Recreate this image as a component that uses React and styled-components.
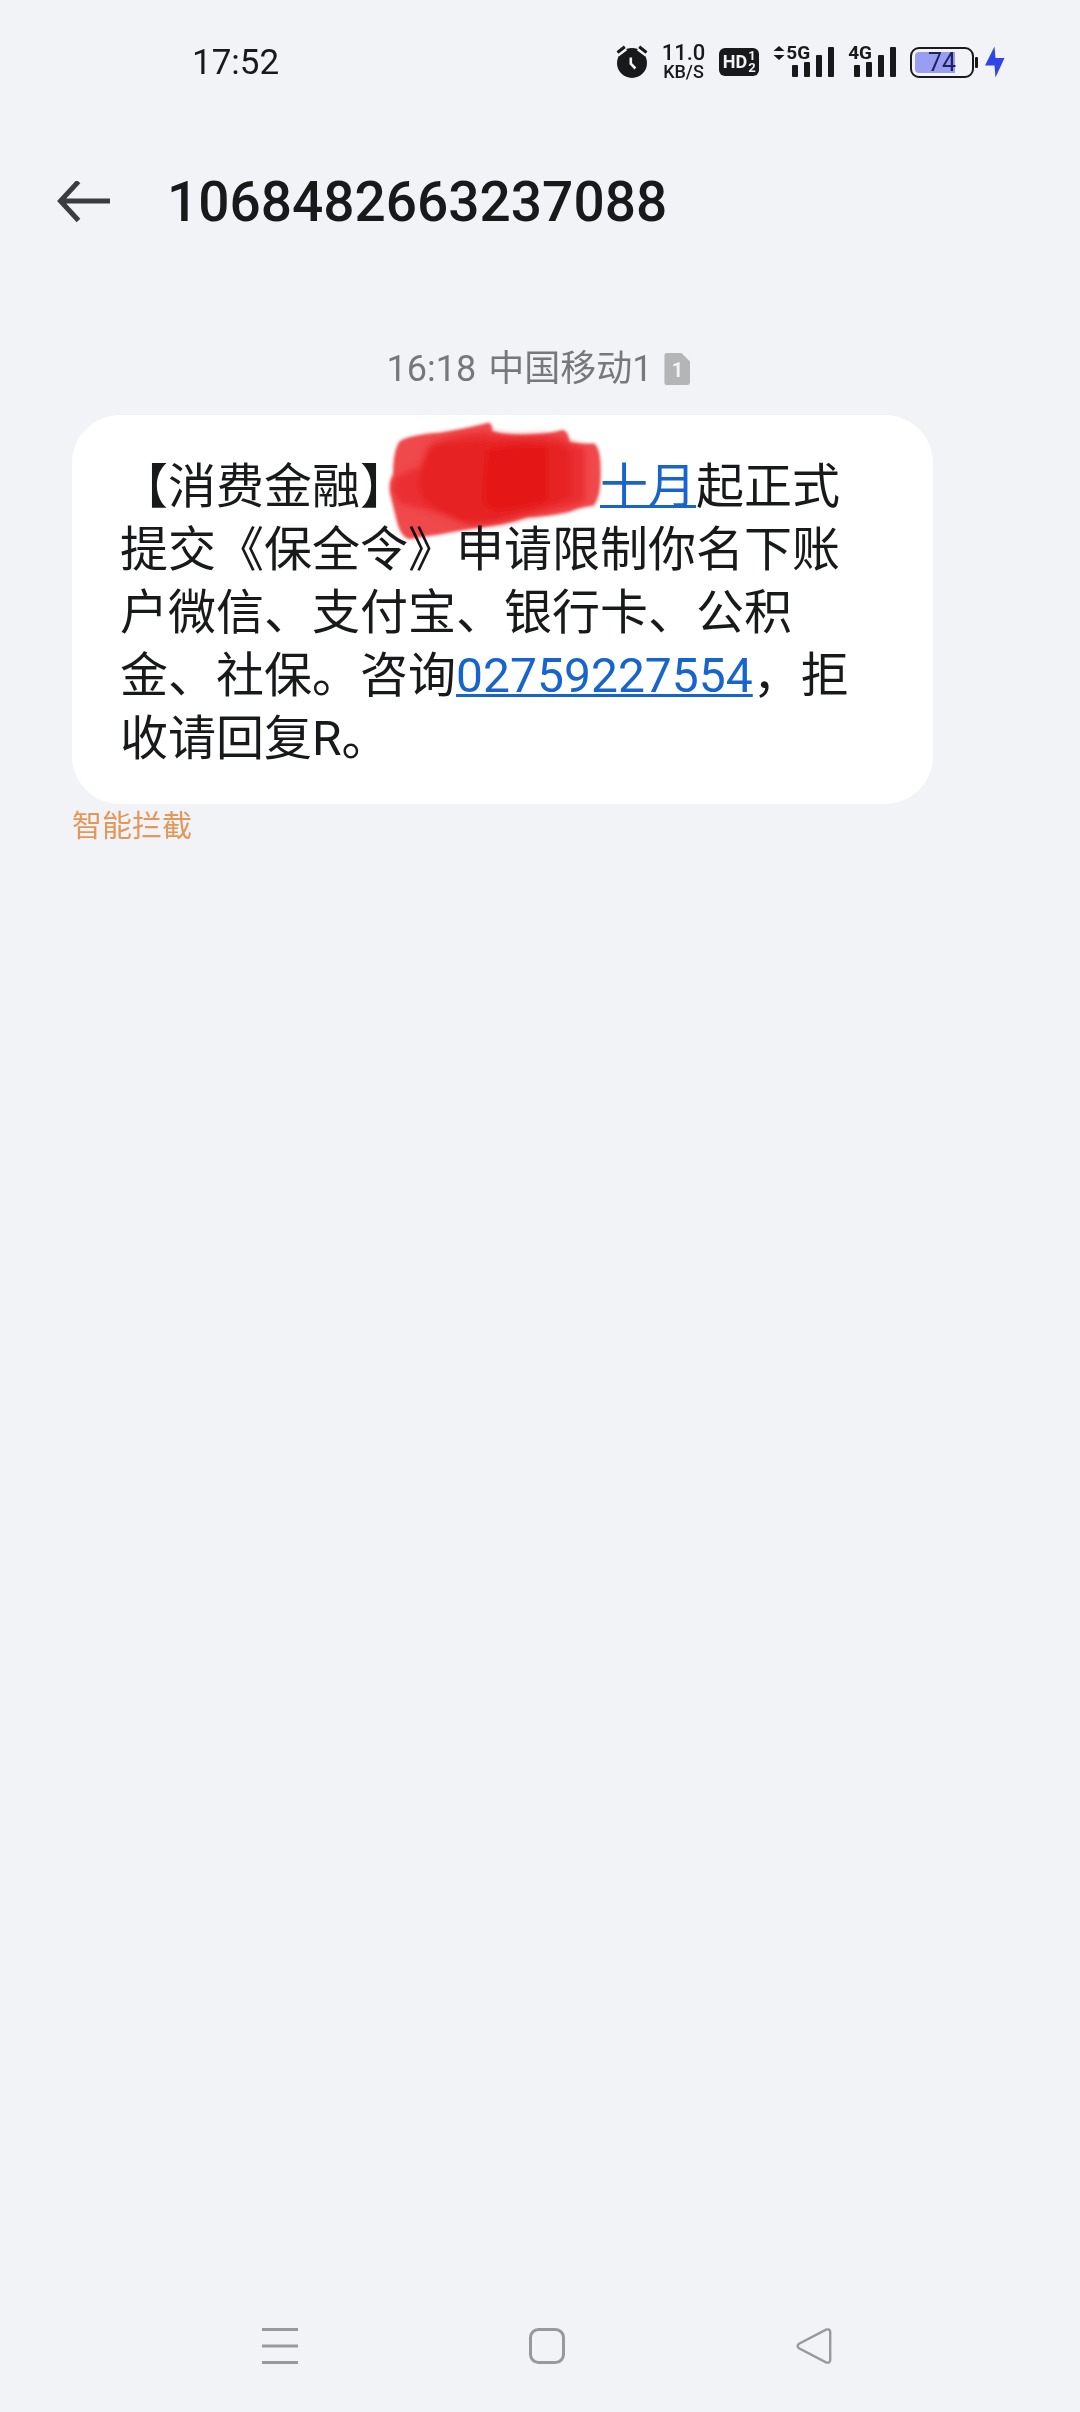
import styled, { createGlobalStyle } from "styled-components";

const GlobalStyle = createGlobalStyle`
    * {
        box-sizing: border-box;
    }

    body {
        margin: 0;
        background: #f2f3f6;
        color: #18191b;
        font-family: Roboto, "Noto Sans CJK SC", sans-serif;
    }

    svg {
        display: block;
        flex-shrink: 0;
    }
`;

function AlarmIcon() {
    return (
        <svg width="32" height="34" viewBox="0 0 32 34" aria-hidden="true">
            <circle cx="16" cy="18" r="15" fill="#18191b" />
            <path d="M1 8.5 9 2.5M23 2.5 31 8.5" stroke="#f2f3f6" strokeWidth="7" fill="none" />
            <path d="M1.5 7.5 8.8 1.8M23.2 1.8 30.5 7.5" stroke="#18191b" strokeWidth="3" fill="none" />
            <path d="M14.8 12.5v6.2l4.6 4.8" stroke="#f2f3f6" strokeWidth="2.6" fill="none" />
        </svg>
    );
}

function Signal({ label, data }) {
    return (
        <SignalBox>
            <SignalHead>
                {data && (
                    <svg width="12" height="16" viewBox="0 0 12 16" aria-hidden="true">
                        <path d="M6 1 11.5 6H.5zM6 15 .5 10h11z" fill="#18191b" />
                    </svg>
                )}
                {label}
            </SignalHead>
            <Bars>
                <Bar $height={12} />
                <Bar $height={15} />
                <Bar $height={22} />
                <Bar $height={30} />
            </Bars>
        </SignalBox>
    );
}

function Scribble() {
    return (
        <ScribbleSvg viewBox="80 50 660 380" aria-hidden="true">
            <defs>
                <filter id="edge" x="-5%" y="-5%" width="110%" height="110%">
                    <feGaussianBlur stdDeviation="5" />
                </filter>
                <filter id="inner" x="-10%" y="-10%" width="120%" height="120%">
                    <feGaussianBlur stdDeviation="9" />
                </filter>
            </defs>
            <path
                d="M118 122Q150 102 240 96Q320 84 385 66Q398 72 396 92Q440 106 510 102Q570 100 608 88Q624 92 628 126Q670 130 700 128Q722 140 721 215Q722 290 700 316Q650 322 630 334Q560 350 500 350Q440 372 380 378Q300 390 240 402Q180 410 148 416Q124 412 112 372Q98 320 90 280Q84 250 98 220Q98 150 118 122z"
                fill="#f0484c"
                filter="url(#edge)"
            />
            <g filter="url(#inner)">
                <path
                    d="M210 130Q280 98 370 94Q440 112 540 104Q600 104 622 124Q670 140 674 150V300Q640 318 600 324Q540 338 480 350Q420 372 340 374Q290 370 270 352Q180 320 120 310Q96 280 96 250Q96 226 184 198Q186 160 210 130z"
                    fill="#ea2f32"
                />
                <path
                    d="M220 134Q300 120 400 124Q500 108 600 134L630 150V290Q560 322 470 342Q400 364 330 368Q290 356 230 326Q180 300 176 250Q180 180 220 134z"
                    fill="#e62124"
                />
                <path d="M380 150Q450 130 560 138V300Q500 320 420 330Q370 325 370 290z" fill="#e51819" />
            </g>
        </ScribbleSvg>
    );
}

function App() {
    return (
        <Page>
            <GlobalStyle />
            <StatusBar>
                <Clock>17:52</Clock>
                <StatusIcons>
                    <AlarmIcon />
                    <NetSpeed>
                        <Speed>11.0</Speed>
                        <Unit>KB/S</Unit>
                    </NetSpeed>
                    <HdBadge>
                        HD
                        <HdSims>
                            <span>1</span>
                            <span>2</span>
                        </HdSims>
                    </HdBadge>
                    <Signal label="5G" data />
                    <Signal label="4G" />
                    <Power>
                        <Battery>
                            <Charge style={{ width: "74%" }} />
                            <Level>74</Level>
                        </Battery>
                        <Nub />
                        <svg width="20" height="32" viewBox="0 0 20 32" aria-hidden="true">
                            <path d="M9.5 .5 0 19.5h9.5L10.5 31.5 19.5 12H10.5z" fill="#2f45e6" />
                        </svg>
                    </Power>
                </StatusIcons>
            </StatusBar>

            <Header>
                <BackButton type="button" aria-label="返回">
                    <svg width="54" height="42" viewBox="0 0 54 42" aria-hidden="true">
                        <path d="M53 20H4M21.5 .5 3.5 20l18 19.5" stroke="#3c3c3d" strokeWidth="5" fill="none" />
                    </svg>
                </BackButton>
                <Title>1068482663237088</Title>
            </Header>

            <Thread>
                <Stamp>
                    <time>16:18</time>
                    <span>中国移动1</span>
                    <SimCard>1</SimCard>
                </Stamp>
                <Message>
                    <Bubble>
                        【消费金融】
                        <Redacted>
                            <Scribble />
                        </Redacted>
                        <Link href="#date">十月</Link>
                        起正式提交《保全令》申请限制你名下账户微信、支付宝、银行卡、公积金、社保。咨询
                        <Link href="tel:02759227554">02759227554</Link>
                        ，拒收请回复R。
                    </Bubble>
                    <Tag>智能拦截</Tag>
                </Message>
            </Thread>

            <NavBar>
                <NavButton type="button" aria-label="最近任务">
                    <svg width="36" height="36" viewBox="0 0 36 36" aria-hidden="true">
                        <path d="M0 1.5h36M0 18h36M0 34.5h36" stroke="#98999c" strokeWidth="3" />
                    </svg>
                </NavButton>
                <NavButton type="button" aria-label="主屏幕">
                    <svg width="36" height="36" viewBox="0 0 36 36" aria-hidden="true">
                        <rect x="1.5" y="1.5" width="33" height="33" rx="8" stroke="#98999c" strokeWidth="3" fill="none" />
                    </svg>
                </NavButton>
                <NavButton type="button" aria-label="返回上一页">
                    <svg width="36" height="36" viewBox="0 0 36 36" aria-hidden="true">
                        <path
                            d="M3 15.8 30 1.7Q34 .4 34.2 4V32Q34 35.6 30 34.3L3 20.2Q.2 18 3 15.8z"
                            stroke="#98999c"
                            strokeWidth="2.4"
                            fill="none"
                        />
                    </svg>
                </NavButton>
            </NavBar>
        </Page>
    );
}

export default App;

const Page = styled.div`
    display: flex;
    flex-direction: column;
    min-height: 100vh;
`;

const StatusBar = styled.div`
    display: flex;
    align-items: center;
    justify-content: space-between;
    height: 124px;
    padding: 0 75px 0 192px;
`;

const Clock = styled.time`
    padding-top: 2px;
    font-size: 35px;
    line-height: 42px;
`;

const StatusIcons = styled.div`
    display: flex;
    align-items: center;
    gap: 14px;
`;

const NetSpeed = styled.div`
    display: flex;
    flex-direction: column;
    align-items: center;
    font-weight: 500;
`;

const Speed = styled.span`
    font-size: 22px;
    line-height: 19px;
`;

const Unit = styled.span`
    font-size: 18px;
    line-height: 19px;
`;

const HdBadge = styled.div`
    display: flex;
    align-items: center;
    justify-content: center;
    gap: 1px;
    width: 40px;
    height: 28px;
    border-radius: 6px;
    background: #18191b;
    color: #f2f3f6;
    font-size: 18px;
    font-weight: 700;
    line-height: 28px;
`;

const HdSims = styled.span`
    display: flex;
    flex-direction: column;
    font-size: 13px;
    line-height: 12px;
`;

const SignalBox = styled.div`
    display: grid;
    justify-items: end;
    height: 34px;
`;

const SignalHead = styled.span`
    display: flex;
    align-items: center;
    gap: 1px;
    grid-area: 1 / 1;
    margin-right: 24px;
    font-size: 19px;
    font-weight: 700;
    line-height: 16px;
    height: 16px;
`;

const Bars = styled.span`
    display: flex;
    align-items: flex-end;
    gap: 6px;
    grid-area: 1 / 1;
    height: 32px;
`;

const Bar = styled.i`
    width: 6px;
    height: ${(props) => props.$height}px;
    border-radius: 1px;
    background: #18191b;
`;

const Power = styled.div`
    display: flex;
    align-items: center;
`;

const Battery = styled.div`
    display: grid;
    align-items: center;
    width: 64px;
    height: 31px;
    padding: 3px;
    border: 2px solid #18191b;
    border-radius: 9px;
`;

const Charge = styled.span`
    grid-area: 1 / 1;
    height: 21px;
    border-radius: 4px 0 0 4px;
    background: #989ef2;
`;

const Level = styled.span`
    grid-area: 1 / 1;
    justify-self: center;
    color: #20235c;
    font-size: 25px;
    line-height: 21px;
`;

const Nub = styled.span`
    width: 3px;
    height: 11px;
    margin: 0 7px 0 1px;
    border-radius: 1px;
    background: #18191b;
`;

const Header = styled.header`
    display: flex;
    align-items: center;
    gap: 56px;
    height: 156px;
    padding: 0 57px;
`;

const BackButton = styled.button`
    padding: 0;
    border: none;
    background: none;
    cursor: pointer;
`;

const Title = styled.h1`
    margin: 0;
    font-size: 55px;
    font-weight: 500;
    line-height: 64px;
`;

const Thread = styled.main`
    flex: 1;
    padding-top: 63px;
`;

const Stamp = styled.div`
    display: flex;
    align-items: center;
    justify-content: center;
    gap: 12px;
    height: 52px;
    padding-right: 3px;
    color: #77787a;
    font-size: 36px;
    line-height: 52px;
`;

const SimCard = styled.span`
    width: 26px;
    height: 32px;
    border-radius: 3px;
    background: #b4b5b7;
    clip-path: polygon(0 0, 65% 0, 100% 28%, 100% 100%, 0 100%);
    color: #f2f3f6;
    font-size: 20px;
    font-weight: 700;
    line-height: 34px;
    text-align: center;
`;

const Message = styled.article`
    margin: 20px 147px 0 72px;
`;

const Bubble = styled.p`
    margin: 0;
    padding: 40px 48px 34px;
    border-radius: 48px;
    background: #fff;
    font-size: 48px;
    line-height: 63px;
    text-spacing-trim: space-all;
`;

const Redacted = styled.span`
    display: inline-block;
    position: relative;
    width: 192px;
    height: 40px;
`;

const ScribbleSvg = styled.svg`
    position: absolute;
    left: -21px;
    top: -46px;
    width: 220px;
    height: 127px;
    mix-blend-mode: multiply;
`;

const Link = styled.a`
    color: #1764cf;
    text-decoration: underline;
    text-decoration-thickness: 3px;
    text-decoration-skip-ink: none;
    text-underline-offset: 2px;
`;

const Tag = styled.span`
    display: block;
    color: #e2985a;
    font-size: 30px;
    line-height: 44px;
`;

const NavBar = styled.nav`
    display: grid;
    grid-template-columns: repeat(3, 1fr);
    height: 132px;
    padding: 0 133px 0 147px;
`;

const NavButton = styled.button`
    display: flex;
    align-items: center;
    justify-content: center;
    padding: 0;
    border: none;
    background: none;
    cursor: pointer;
`;
